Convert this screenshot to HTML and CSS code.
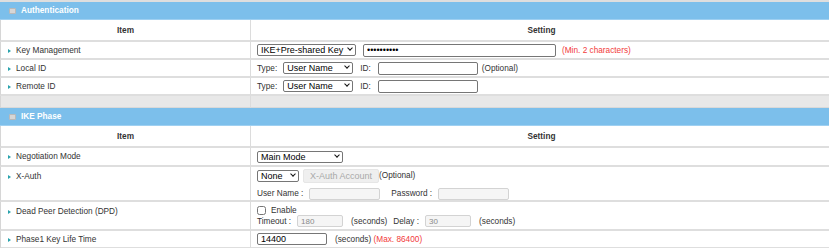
FILE: index.html
```html
<!DOCTYPE html>
<html lang="en">
<head>
  <meta charset="UTF-8" />
  <meta name="viewport" content="width=device-width, initial-scale=1.0"/>
  <title>IPSec Tunnel Setting</title>
  <link rel="stylesheet" href="styles.css">
</head>
<body>

  <div class="top-strip"></div>

  <!-- Authentication -->
  <table class="cfg auth">
    <colgroup><col class="c-item"><col></colgroup>
    <tr class="title"><td colspan="2"><span class="ico"></span>Authentication</td></tr>
    <tr class="head"><th class="col-item">Item</th><th class="col-set">Setting</th></tr>
    <tr class="row">
      <td class="lbl">Key Management</td>
      <td class="val">
        <div class="line">
          <span class="dd sel-key"><select><option>IKE+Pre-shared Key</option></select></span>
          <input type="password" class="in-psk" value="1234567890">
          <span class="warn">(Min. 2 characters)</span>
        </div>
      </td>
    </tr>
    <tr class="row">
      <td class="lbl">Local ID</td>
      <td class="val">
        <div class="line">
          <span class="txt-type">Type:</span>
          <span class="dd sel-type"><select><option>User Name</option></select></span>
          <span class="txt-id">ID:</span>
          <input type="text" class="in-id">
          <span class="note">(Optional)</span>
        </div>
      </td>
    </tr>
    <tr class="row">
      <td class="lbl">Remote ID</td>
      <td class="val">
        <div class="line">
          <span class="txt-type">Type:</span>
          <span class="dd sel-type"><select><option>User Name</option></select></span>
          <span class="txt-id">ID:</span>
          <input type="text" class="in-id">
        </div>
      </td>
    </tr>
    <tr class="gap"><td class="gap-l"></td><td class="val"></td></tr>
  </table>

  <!-- IKE Phase -->
  <table class="cfg ike">
    <colgroup><col class="c-item"><col></colgroup>
    <tr class="title"><td colspan="2"><span class="ico"></span>IKE Phase</td></tr>
    <tr class="head"><th class="col-item">Item</th><th class="col-set">Setting</th></tr>
    <tr class="row row-neg">
      <td class="lbl">Negotiation Mode</td>
      <td class="val">
        <div class="line">
          <span class="dd sel-mode"><select><option>Main Mode</option></select></span>
        </div>
      </td>
    </tr>
    <tr class="row row-xauth">
      <td class="lbl top">X-Auth</td>
      <td class="val">
        <div class="line line-first">
          <span class="dd sel-none"><select><option>None</option></select></span>
          <button class="btn-account" disabled>X-Auth Account</button>
          <span>(Optional)</span>
        </div>
        <div class="line">
          <span class="txt-user">User Name :</span>
          <input type="text" class="in-off in-user" disabled>
          <span class="txt-pass">Password :</span>
          <input type="text" class="in-off in-user" disabled>
        </div>
      </td>
    </tr>
    <tr class="row row-dpd">
      <td class="lbl top">Dead Peer Detection (DPD)</td>
      <td class="val">
        <div class="line line-check">
          <input type="checkbox" id="dpd"><label for="dpd">Enable</label>
        </div>
        <div class="line">
          <span class="txt-timeout">Timeout :</span>
          <input type="text" class="in-off in-sec" value="180" disabled>
          <span class="txt-sec">(seconds)</span>
          <span class="txt-delay">Delay :</span>
          <input type="text" class="in-off in-sec" value="30" disabled>
          <span class="txt-sec">(seconds)</span>
        </div>
      </td>
    </tr>
    <tr class="row">
      <td class="lbl">Phase1 Key Life Time</td>
      <td class="val">
        <div class="line">
          <input type="text" class="in-life" value="14400">
          <span class="txt-sec">(seconds)</span>
          <span class="warn">&nbsp;(Max. 86400)</span>
        </div>
      </td>
    </tr>
  </table>

</body>
</html>
```

FILE: styles.css
```css
* {
  box-sizing: border-box;
}

html, body {
  margin: 0;
  padding: 0;
  overflow: hidden;
  background: #fff;
  font-family: "Liberation Sans", Arial, sans-serif;
  font-size: 8.25px;
  color: #333;
}

.top-strip {
  width: 832px;
  height: 2px;
  background: #dedede;
}

.cfg {
  width: 832px;
  border-spacing: 0;
  table-layout: fixed;
}

.c-item {
  width: 250px;
}

.cfg td, .cfg th {
  padding: 0;
}

/* section title bar */
.title td {
  height: 18px;
  background: #7cbfeb;
  border-bottom: 1px solid #9fd0f1;
  color: #fff;
  font-weight: bold;
  padding-left: 9px;
}

.ico {
  display: inline-block;
  width: 7px;
  height: 6px;
  margin-right: 5px;
  vertical-align: -1px;
  background: #d6d6d6;
  border: 1px solid #b9b9b9;
  border-radius: 1px;
}

.head th {
  height: 22px;
  border-bottom: 2px solid #dedede;
  font-weight: bold;
  color: #333;
}

.col-item, .lbl, .gap-l {
  border-left: 1px solid #d6d6d6;
}

.col-set, .val {
  border-left: 1px solid #dcdcdc;
}

.row td {
  height: 18px;
  border-bottom: 2px solid #dedede;
}

.row-neg td {
  height: 19px;
}

.row-xauth td {
  height: 35px;
}

.row-dpd td {
  height: 29px;
}

.lbl {
  padding-left: 7px !important;
  color: #333;
}

.lbl::before {
  content: "";
  display: inline-block;
  width: 0;
  height: 0;
  margin-right: 5px;
  border-left: 3px solid #2aa3ad;
  border-top: 2.5px solid transparent;
  border-bottom: 2.5px solid transparent;
}

.lbl.top {
  vertical-align: top;
  padding-top: 5px !important;
}

.val {
  padding-left: 6px !important;
}

.gap td {
  height: 12px;
  background: #e8e8e8;
  border-bottom: 1px solid #d9d9d9;
}

.line {
  display: flex;
  align-items: center;
  white-space: nowrap;
}

/* form controls */
select, input, button {
  font-family: "Liberation Sans", Arial, sans-serif;
  margin: 0;
}

.dd {
  position: relative;
  display: inline-block;
  height: 12px;
}

.dd select {
  appearance: none;
  width: 100%;
  height: 12px;
  padding: 0 0 0 3px;
  font-size: 9px;
  line-height: 10px;
  color: #000;
  background: #fff;
  border: 1px solid #767676;
  border-radius: 2px;
}

/* chevron drawn over the select */
.dd::after {
  content: "";
  position: absolute;
  right: 4px;
  top: 2px;
  width: 3px;
  height: 3px;
  border-right: 1.5px solid #111;
  border-bottom: 1.5px solid #111;
  transform: rotate(45deg);
  pointer-events: none;
}

input[type="text"], input[type="password"] {
  height: 13px;
  padding: 0 3px;
  font-size: 9px;
  color: #000;
  border: 1px solid #767676;
  border-radius: 2px;
}

.ike input[type="text"] {
  height: 12px;
}

.in-off {
  background: #f5f5f5;
  border-color: #d3d3d3 !important;
  color: #8a8a8a !important;
  font-size: 8px !important;
}

.warn {
  color: #f23a3a;
}

.sel-key { width: 99px; margin-right: 7px; }
.in-psk { width: 193px; margin-right: 6px; }

.txt-type { margin-right: 6px; }
.sel-type { width: 70px; margin-right: 7px; }
.txt-id { margin-right: 7px; }
.in-id { width: 100px; margin-right: 4px; }

.sel-mode { width: 86px; }

.line-first { margin-top: 1px; }
.sel-none { width: 42px; margin-right: 4px; }

.btn-account {
  height: 14px;
  padding: 0 6px;
  font-size: 9px;
  color: #a9a9a9;
  background: #efefef;
  border: 1px solid #e6e6e6;
  border-radius: 2px;
}

.txt-user { margin: 5px 6px 0 0; }
.in-user { width: 71px; margin-top: 5px; }
.txt-pass { margin: 5px 6px 0 11px; }

.line-check { margin-top: 2px; }
.line-check input {
  width: 9px;
  height: 9px;
  margin: 0 5px 0 0;
}

.txt-timeout { margin-right: 6px; }
.in-sec { width: 46px; }
.txt-sec { margin-left: 8px; }
.txt-delay { margin: 0 6px 0 6px; }

.in-life { width: 70px; }
```
